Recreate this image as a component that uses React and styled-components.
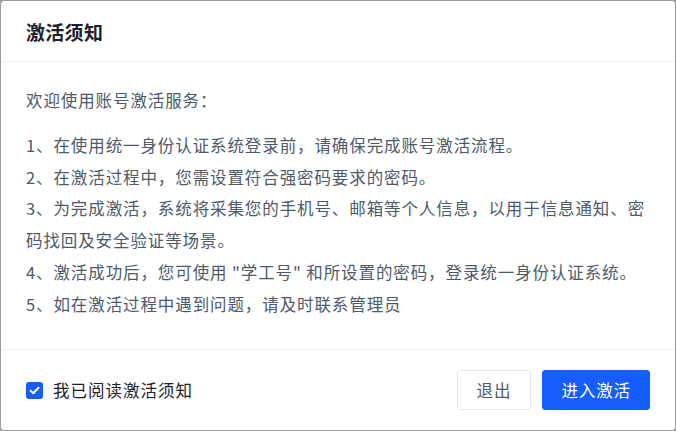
import React, { useState } from 'react';
import styled, { createGlobalStyle } from 'styled-components';

const GlobalStyle = createGlobalStyle`
  html, body {
    margin: 0;
    padding: 0;
    background: #9c9c9c;
  }
  body {
    font-family: "Noto Sans CJK SC", "Noto Sans", "Liberation Sans", sans-serif;
  }
`;

const Modal = styled.div`
  box-sizing: border-box;
  width: 676px;
  height: 431px;
  background: #fff;
  border: 1px solid #9c9c9c;
  border-radius: 4px;
  display: flex;
  flex-direction: column;
  overflow: hidden;
`;

const Header = styled.header`
  height: 60px;
  display: flex;
  align-items: center;
  padding: 0 25px;
  border-bottom: 1px solid #eff0f3;
  flex-shrink: 0;
`;

const Title = styled.h2`
  margin: 0;
  font-size: 19px;
  font-weight: 700;
  letter-spacing: 0.3px;
  color: #1d2129;
`;

const Body = styled.div`
  flex: 1;
  padding: 23px 25px 0;
  color: #4e5969;
  font-size: 16.5px;
  letter-spacing: 0.9px;
  line-height: 31.8px;
`;

const Intro = styled.p`
  margin: 0 0 13px;
`;

const Item = styled.p`
  margin: 0;
`;

const Footer = styled.footer`
  height: 80px;
  flex-shrink: 0;
  border-top: 1px solid #eff0f3;
  display: flex;
  align-items: center;
  justify-content: space-between;
  padding: 0 25px;
`;

const Agree = styled.label`
  display: flex;
  align-items: center;
  gap: 10px;
  font-size: 16.5px;
  letter-spacing: 1px;
  color: #1d2129;
  cursor: pointer;
`;

const Box = styled.span`
  width: 17px;
  height: 17px;
  border-radius: 3px;
  display: flex;
  align-items: center;
  justify-content: center;
  background: ${props => (props.checked ? '#165dff' : '#fff')};
  border: ${props => (props.checked ? 'none' : '1px solid #c9cdd4')};
  box-sizing: border-box;
`;

const Actions = styled.div`
  display: flex;
  gap: 11px;
`;

const Button = styled.button`
  height: 40px;
  padding: 0 ${props => (props.primary ? '18px' : '19px')};
  border-radius: 3px;
  font-family: inherit;
  font-size: 16.5px;
  letter-spacing: 0.9px;
  cursor: pointer;
  border: 1px solid ${props => (props.primary ? '#165dff' : '#e5e6eb')};
  background: ${props => (props.primary ? '#165dff' : '#fff')};
  color: ${props => (props.primary ? '#fff' : '#4e5969')};
`;

const items = [
  '1、在使用统一身份认证系统登录前，请确保完成账号激活流程。',
  '2、在激活过程中，您需设置符合强密码要求的密码。',
  '3、为完成激活，系统将采集您的手机号、邮箱等个人信息，以用于信息通知、密码找回及安全验证等场景。',
  '4、激活成功后，您可使用 "学工号" 和所设置的密码，登录统一身份认证系统。',
  '5、如在激活过程中遇到问题，请及时联系管理员',
];

export default function App() {
  const [checked, setChecked] = useState(true);
  return (
    <>
      <GlobalStyle />
      <Modal>
        <Header>
          <Title>激活须知</Title>
        </Header>
        <Body>
          <Intro>欢迎使用账号激活服务：</Intro>
          {items.map(text => (
            <Item key={text}>{text}</Item>
          ))}
        </Body>
        <Footer>
          <Agree onClick={() => setChecked(!checked)}>
            <Box checked={checked}>
              {checked && (
                <svg width="11" height="9" viewBox="0 0 11 9">
                  <path d="M1.5 4.6 L4.2 7.2 L9.5 1.8" fill="none" stroke="#fff" strokeWidth="2" strokeLinecap="round" strokeLinejoin="round" />
                </svg>
              )}
            </Box>
            我已阅读激活须知
          </Agree>
          <Actions>
            <Button>退出</Button>
            <Button primary>进入激活</Button>
          </Actions>
        </Footer>
      </Modal>
    </>
  );
}
